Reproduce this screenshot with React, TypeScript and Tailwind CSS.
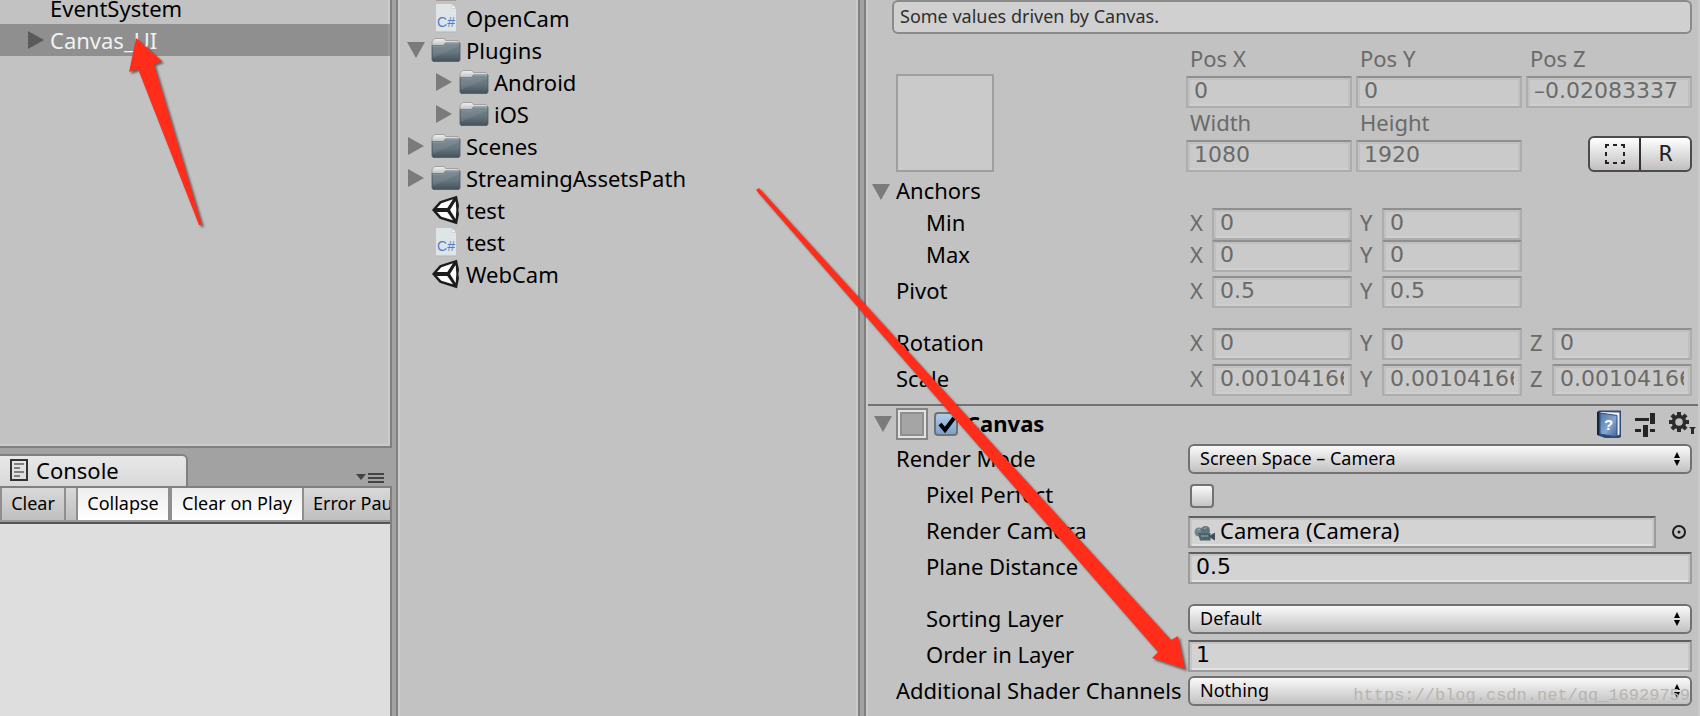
import type { ReactNode } from "react"
import clsx from "clsx"

const fieldBase =
  "block h-8 w-full min-w-0 rounded-none border-2 px-1.5 pb-1 text-[22px] leading-6 outline-none"
const numeric = "font-['DejaVu_Sans',sans-serif]"
const fieldOff =
  "border-[#adadad] border-t-[#8f8f8f] bg-[#cacaca] text-[#6a6a6a] shadow-[inset_0_2px_0_#bfbfbf,inset_2px_0_0_#c0c0c0,inset_-2px_0_0_#c0c0c0,inset_0_-2px_0_#d0d0d0]"
const fieldOn =
  "border-[#9b9b9b] border-t-[#5f5f5f] bg-[#d3d3d3] text-black shadow-[inset_0_2px_0_#c4c4c4,inset_2px_0_0_#c6c6c6,inset_-2px_0_0_#c6c6c6,inset_0_-2px_0_#e2e2e2]"

function Foldout({ open, dark }: { open?: boolean; dark?: boolean }) {
  return (
    <svg viewBox="0 0 18 18" className={clsx("h-[18px] w-[18px] shrink-0", dark ? "fill-[#5a5a5a]" : "fill-[#7b7b7b]")}>
      {open ? <path d="M0 1h18L9 17z" /> : <path d="M1 0v18l16-9z" />}
    </svg>
  )
}

function FolderIcon() {
  return (
    <svg viewBox="0 0 30 26" className="h-[26px] w-[30px] shrink-0">
      <defs>
        <linearGradient id="folder" x1="0" y1="0" x2="0" y2="1">
          <stop offset="0" stopColor="#74858d" />
          <stop offset="0.5" stopColor="#66767e" />
          <stop offset="1" stopColor="#44525a" />
        </linearGradient>
        <linearGradient id="folderTab" x1="0" y1="0" x2="0" y2="1">
          <stop offset="0" stopColor="#f2f2f2" />
          <stop offset="1" stopColor="#b9bcbd" />
        </linearGradient>
      </defs>
      <path d="M1 9V4.500L4 1.500h9l1.500 2H27l1.500 1.500v4z" fill="url(#folderTab)" stroke="#8f9496" strokeWidth="0.800" />
      <path d="M1 8.500h11.500l2-2.500H29v17l-1 1.500H2L1 23z" fill="url(#folder)" stroke="#4b5a62" strokeWidth="0.800" />
      <path d="M1.500 9h11.300l2-2.500h13.700" fill="none" stroke="#93a2a9" strokeWidth="0.900" />
      <path d="M2 21L28 9.500V7H15l-2 2.500H2z" fill="#fff" opacity="0.080" />
    </svg>
  )
}

function ScriptIcon() {
  return (
    <svg viewBox="0 0 30 30" className="h-[30px] w-[30px] shrink-0">
      <path d="M5 1h16l4 4.500V29H5z" fill="#dfe4e7" />
      <path d="M5 29h20" stroke="#b1b3b4" />
      <path d="M21 1v4.500h4z" fill="#f7f9fa" stroke="#c5cacd" strokeWidth="0.700" />
      <text x="15" y="24" textAnchor="middle" fontSize="14" className="fill-[#4f7cc8] font-['Liberation_Sans',sans-serif]">
        C#
      </text>
    </svg>
  )
}

function UnityIcon() {
  return (
    <svg viewBox="0 0 90 90" className="h-[30px] w-[30px] shrink-0">
      <path d="M3 45L26 19 78 2l6 30-2 13 2 13-6 30-52-17z" fill="#1c1c1c" />
      <path d="M18 39L31 25l35-12-17 26z" fill="#fff" />
      <path d="M18 51l13 14 35 11-17-25z" fill="#fff" />
      <path d="M57 45l17-27 2 27-2 27z" fill="#fff" />
    </svg>
  )
}

function CameraIcon() {
  return (
    <svg viewBox="0 0 22 16" className="h-4 w-[22px]">
      <circle cx="5" cy="6" r="4.500" fill="#6f848c" />
      <circle cx="11.500" cy="4.500" r="4.500" fill="#5e737c" />
      <path d="M4 7h12.500v7.500H6z" fill="#4d626b" />
      <path d="M16 9.500l5-3v8l-5-3z" fill="#3f5058" />
      <path d="M3.500 4.500a2 2 0 0 1 2.500-1M10 3a2 2 0 0 1 2.500-1" stroke="#a9b8be" fill="none" />
      <path d="M7 10h7" stroke="#7f949c" strokeWidth="1.500" />
    </svg>
  )
}

function BookIcon() {
  return (
    <svg viewBox="0 0 26 28" className="h-7 w-[26px]">
      <defs>
        <linearGradient id="book" x1="0" y1="0" x2="1" y2="1">
          <stop offset="0" stopColor="#4f74a8" />
          <stop offset="0.550" stopColor="#86a6d0" />
          <stop offset="1" stopColor="#3f6497" />
        </linearGradient>
      </defs>
      <path d="M1 2L3 .500h22V27l-2 1H9l-8-3z" fill="#2c4a76" />
      <path d="M4 2l19.500.500v22l-2 1z" fill="#eef1f5" />
      <path d="M1 2.500l2-1v24L1 24.500z" fill="#14243c" />
      <path d="M4 3l17 2.500V27L4 24z" fill="url(#book)" stroke="#2e4d7c" />
      <text x="12.500" y="20" textAnchor="middle" fontSize="15" className="fill-white font-['Liberation_Sans',sans-serif] font-bold">
        ?
      </text>
    </svg>
  )
}

function PresetIcon() {
  return (
    <svg viewBox="0 0 22 26" className="h-[26px] w-[22px] fill-[#252525]">
      <path d="M1 7h14v3H1zM16 2h5v11h-5zM1 18h6v3H1zM9 14h5v12H9zM16 18h5v3h-5z" />
    </svg>
  )
}

function GearIcon() {
  const teeth = [0, 45, 90, 135, 180, 225, 270, 315]
  return (
    <svg viewBox="0 0 28 26" className="h-[26px] w-7 fill-[#2c2c2c]">
      {teeth.map((angle) => (
        <rect key={angle} x="9" y="1" width="4" height="5" transform={`rotate(${angle} 11 11)`} />
      ))}
      <circle cx="11" cy="11" r="5.500" fill="none" stroke="#2c2c2c" strokeWidth="3.500" />
      <path d="M21 16h7l-2 2v5h-3v-5z" />
    </svg>
  )
}

function TreeRow({ label, icon, depth = 0, fold }: { label: string; icon: ReactNode; depth?: number; fold?: "open" | "closed" }) {
  return (
    <li className={clsx("flex h-8 items-center", depth === 1 && "pl-7")}>
      <span className="ml-[7px] w-6">{fold && <Foldout open={fold === "open"} />}</span>
      {icon}
      <span className="ml-[5px] text-[22px]">{label}</span>
    </li>
  )
}

function Hierarchy() {
  return (
    <section className="min-h-0 flex-1 border-r-2 border-b-2 border-[#7f7f7f]">
      <div className="h-full border-r-2 border-b-2 border-[#cbcbcb] bg-[#c2c2c2]">
        <ul className="text-[22px]">
          <li className="h-6 pl-[50px] leading-4">EventSystem</li>
          <li className="-mr-0.5 flex h-8 items-center border-r-2 border-[#9b9b9b] bg-[#8f8f8f] pl-[27px] text-[#f2f2f2]">
            <Foldout dark />
            <span className="ml-[5px]">Canvas_UI</span>
          </li>
        </ul>
      </div>
    </section>
  )
}

function Console() {
  const idle = "bg-linear-to-b from-[#d9d9d9] to-[#bfbfbf] pb-0.5"
  const active = "bg-linear-to-b from-[#eeeeee] to-white pb-0.5"
  return (
    <section className="flex h-[268px] flex-col">
      <div className="flex h-[38px] items-end justify-between">
        <button className="flex h-8 w-[188px] items-center rounded-tr-md border-t-2 border-r-2 border-[#808080] bg-linear-to-b from-[#e8e8e8] to-[#d9d9d9] pb-0.5 pl-2.5 text-[22px]">
          <svg viewBox="0 0 18 22" className="h-[22px] w-[18px] fill-none stroke-[#333]">
            <path d="M1 1h16v20H1z" strokeWidth="2" />
            <path d="M4 5h10M4 9h6M4 13h10M4 17h6" stroke="#808080" strokeWidth="2" />
          </svg>
          <span className="ml-2">Console</span>
        </button>
        <button aria-label="Console menu" className="mr-2 mb-0.5">
          <svg viewBox="0 0 28 12" className="h-3 w-7 fill-[#444]">
            <path d="M0 2h10L5 8zM12 1h16v2H12zM12 5h16v2H12zM12 9h16v2H12z" />
          </svg>
        </button>
      </div>
      <div className="min-h-0 flex-1 border-t-2 border-r-2 border-[#808080] bg-[#dedede]">
        <div className="flex h-9 overflow-hidden border-b-2 border-[#555] text-lg whitespace-nowrap">
          <div className="flex w-full border-b-2 border-[#999]">
            <button className={clsx("w-[66px] shrink-0 border-r-2 border-l-2 border-[#8f8f8f]", idle)}>Clear</button>
            <span className={clsx("w-2.5 shrink-0", idle)} />
            <button className={clsx("w-[94px] shrink-0 border-r-2 border-l-2 border-[#8f8f8f]", active)}>Collapse</button>
            <button className={clsx("w-[134px] shrink-0 border-r-2 border-l-2 border-[#8f8f8f]", active)}>Clear on Play</button>
            <button className={clsx("shrink-0 pr-4 pl-[9px]", idle)}>Error Pause</button>
          </div>
        </div>
      </div>
    </section>
  )
}

function Project() {
  return (
    <section className="w-[464px] shrink-0 border-x-2 border-[#7f7f7f]">
      <div className="h-full border-x-2 border-[#cbcbcb] bg-[#c2c2c2]">
        <div className="h-0.5 pl-9">
          <div className="h-px w-5 bg-[#a59c9a]" />
        </div>
        <ul>
          <TreeRow label="OpenCam" icon={<ScriptIcon />} />
          <TreeRow label="Plugins" icon={<FolderIcon />} fold="open" />
          <TreeRow label="Android" icon={<FolderIcon />} fold="closed" depth={1} />
          <TreeRow label="iOS" icon={<FolderIcon />} fold="closed" depth={1} />
          <TreeRow label="Scenes" icon={<FolderIcon />} fold="closed" />
          <TreeRow label="StreamingAssetsPath" icon={<FolderIcon />} fold="closed" />
          <TreeRow label="test" icon={<UnityIcon />} />
          <TreeRow label="test" icon={<ScriptIcon />} />
          <TreeRow label="WebCam" icon={<UnityIcon />} />
        </ul>
      </div>
    </section>
  )
}

function StackedField({ label, value }: { label: string; value: string }) {
  return (
    <label className="block text-[22px] text-[#6a6a6a]">
      <span className="block h-8 pl-1 leading-7">{label}</span>
      <input disabled defaultValue={value} className={clsx(fieldBase, fieldOff, numeric)} />
    </label>
  )
}

function VectorRow({ name, values, indent }: { name: string; values: string[]; indent?: boolean }) {
  const axes = ["X", "Y", "Z"]
  return (
    <div className="flex h-8 items-center">
      <span className={clsx("w-[290px] shrink-0 pb-1 text-[22px] leading-7", indent && "pl-[30px]")}>{name}</span>
      <div className="grid flex-1 grid-cols-3 gap-1">
        {values.map((value, i) => (
          <label key={axes[i]} className="flex items-center text-[22px] text-[#6a6a6a]">
            <span className="w-[26px] shrink-0 pb-1 pl-1 leading-7">{axes[i]}</span>
            <input disabled defaultValue={value} aria-label={`${name} ${axes[i]}`} className={clsx(fieldBase, fieldOff, numeric)} />
          </label>
        ))}
      </div>
    </div>
  )
}

function PropertyRow({ id, name, indent, children }: { id: string; name: string; indent?: boolean; children: ReactNode }) {
  return (
    <div className="flex h-8 items-center">
      <label htmlFor={id} className={clsx("mr-0.5 w-[290px] shrink-0 pb-1 text-[22px] leading-7 whitespace-nowrap", indent && "pl-[30px]")}>
        {name}
      </label>
      {children}
    </div>
  )
}

function Popup({ id, value }: { id: string; value: string }) {
  return (
    <div className="relative mb-0.5 flex-1">
      <select
        id={id}
        defaultValue={value}
        className="block h-[30px] w-full appearance-none rounded-md border-2 border-[#727272] bg-linear-to-b from-[#fafafa] to-[#c3c1c2] pr-8 pb-0.5 pl-2.5 text-lg leading-6 text-black outline-none"
      >
        <option>{value}</option>
      </select>
      <svg viewBox="0 0 6 14" className="pointer-events-none absolute top-2 right-3 h-3.5 w-1.5 fill-black">
        <path d="M3 0l3 6H0zM0 8h6l-3 6z" />
      </svg>
    </div>
  )
}

function Tick({ id, checked, label }: { id: string; checked?: boolean; label?: string }) {
  return (
    <span className="relative h-6 w-6 shrink-0">
      <input
        id={id}
        type="checkbox"
        aria-label={label}
        defaultChecked={checked}
        className="block h-6 w-6 appearance-none rounded border-2 border-[#727272] bg-linear-to-b from-[#fafafa] to-[#c6c4c5] checked:from-[#b4cbe6] checked:to-[#7aa0d2]"
      />
      {checked && (
        <svg viewBox="0 0 24 24" className="pointer-events-none absolute inset-0 h-6 w-6 fill-none stroke-black stroke-[4]">
          <path d="M6 12l5 6L20 6" />
        </svg>
      )}
    </span>
  )
}

function Inspector() {
  return (
    <section className="min-w-0 flex-1 border-l-2 border-[#7f7f7f]">
      <div className="h-full border-x-2 border-[#cbcbcb] bg-[#c2c2c2]">
        <div className="pr-1.5 pb-2 pl-6">
          <p className="h-[34px] rounded-md border-2 border-[#8a8a8a] bg-[#d0d0d0] pl-1.5 text-lg leading-7 text-[#2e2e2e]">
            Some values driven by Canvas.
          </p>
          <div className="mt-2.5 flex items-end pl-1">
            <div className="mr-48 h-[98px] w-[98px] shrink-0 border-2 border-[#9f9f9f] bg-[#cacaca]" />
            <div className="grid flex-1 grid-cols-3 items-end gap-x-1">
              <StackedField label="Pos X" value="0" />
              <StackedField label="Pos Y" value="0" />
              <StackedField label="Pos Z" value="–0.02083337" />
              <StackedField label="Width" value="1080" />
              <StackedField label="Height" value="1920" />
              <div className="ml-auto flex h-9 w-[104px] divide-x-2 divide-[#333] rounded-md border-2 border-[#4c4c4c] bg-linear-to-b from-white to-[#c1bfc0]">
                <button aria-label="Blueprint mode" className="flex flex-1 items-center justify-center">
                  <svg viewBox="0 0 20 20" className="h-5 w-5 fill-[#222]">
                    <path d="M0 0h4v2H2v2H0zM8 0h4v2H8zM16 0h4v4h-2V2h-2zM0 8h2v4H0zM18 8h2v4h-2zM0 16h2v2h2v2H0zM8 18h4v2H8zM18 16h2v4h-4v-2h2z" />
                  </svg>
                </button>
                <button aria-label="Raw edit mode" className="flex-1 font-['DejaVu_Sans_Mono',monospace] text-[22px] leading-8 text-[#222]">
                  R
                </button>
              </div>
            </div>
          </div>
          <div className="mt-1 flex h-8 items-center text-[22px]">
            <span className="-ml-5 w-6">
              <Foldout open />
            </span>
            <span className="pb-1 leading-7">Anchors</span>
          </div>
          <div className="pl-1">
            <VectorRow name="Min" values={["0", "0"]} indent />
            <VectorRow name="Max" values={["0", "0"]} indent />
            <div className="mt-1">
              <VectorRow name="Pivot" values={["0.5", "0.5"]} />
            </div>
            <div className="mt-5 flex flex-col gap-1">
              <VectorRow name="Rotation" values={["0", "0", "0"]} />
              <VectorRow name="Scale" values={["0.001041666", "0.001041666", "0.001041666"]} />
            </div>
          </div>
        </div>

        <div className="border-t-2 border-[#727272] pt-0.5">
          <header className="flex h-8 items-center pr-0.5 pl-1.5">
            <Foldout open />
            <span className="ml-1 h-8 w-8 border-2 border-[#858585] bg-[#e2e2e2] p-0.5">
              <span className="block h-full border-2 border-[#8f8f8f] bg-[#a5a5a5]" />
            </span>
            <span className="ml-1.5 flex">
              <Tick id="canvas-enabled" checked label="Canvas enabled" />
            </span>
            <h2 className="ml-2 pb-0.5 text-[22px] leading-7 font-bold">Canvas</h2>
            <div className="ml-auto flex items-center gap-3">
              <button aria-label="Help"><BookIcon /></button>
              <button aria-label="Presets"><PresetIcon /></button>
              <button aria-label="Settings"><GearIcon /></button>
            </div>
          </header>
          <div className="mt-1 flex flex-col gap-1 pr-1.5 pl-7">
            <PropertyRow id="render-mode" name="Render Mode">
              <Popup id="render-mode" value="Screen Space – Camera" />
            </PropertyRow>
            <PropertyRow id="pixel-perfect" name="Pixel Perfect" indent>
              <span className="flex pl-0.5">
                <Tick id="pixel-perfect" />
              </span>
            </PropertyRow>
            <PropertyRow id="render-camera" name="Render Camera" indent>
              <div className="relative flex-1">
                <input id="render-camera" readOnly defaultValue="Camera (Camera)" className={clsx(fieldBase, fieldOn, "pl-[30px]")} />
                <span className="pointer-events-none absolute top-2.5 left-1.5">
                  <CameraIcon />
                </span>
              </div>
              <button aria-label="Select camera" className="ml-2.5 w-[26px]">
                <svg viewBox="0 0 16 16" className="mx-auto h-4 w-4">
                  <circle cx="8" cy="8" r="6" fill="none" stroke="#1c1c1c" strokeWidth="2" />
                  <circle cx="8" cy="8" r="1.500" fill="#1c1c1c" />
                </svg>
              </button>
            </PropertyRow>
            <PropertyRow id="plane-distance" name="Plane Distance" indent>
              <input id="plane-distance" defaultValue="0.5" className={clsx(fieldBase, fieldOn, numeric, "flex-1")} />
            </PropertyRow>
            <div className="h-3" />
            <PropertyRow id="sorting-layer" name="Sorting Layer" indent>
              <Popup id="sorting-layer" value="Default" />
            </PropertyRow>
            <PropertyRow id="order-in-layer" name="Order in Layer" indent>
              <input id="order-in-layer" defaultValue="1" className={clsx(fieldBase, fieldOn, numeric, "flex-1")} />
            </PropertyRow>
            <PropertyRow id="shader-channels" name="Additional Shader Channels">
              <Popup id="shader-channels" value="Nothing" />
            </PropertyRow>
          </div>
        </div>
      </div>
    </section>
  )
}

function Arrows() {
  return (
    <svg viewBox="0 0 1700 716" className="pointer-events-none absolute top-0 left-0 h-[716px] w-[1700px] fill-[#ff2d1a] drop-shadow-[2px_2px_1px_rgba(0,0,0,0.5)]">
      <path d="M136 38L162 61l-8 3 48 161h-3L138 69l-9 3z" />
      <path d="M756 190l3-2 412 452 7-4 7 33-33-11 6-6z" />
    </svg>
  )
}

export default function App() {
  return (
    <main className="relative flex h-screen gap-1 overflow-hidden bg-[#a2a2a2] font-['Noto_Sans','Open_Sans',sans-serif] text-black">
      <div className="flex w-[392px] shrink-0 flex-col">
        <Hierarchy />
        <Console />
      </div>
      <Project />
      <Inspector />
      <Arrows />
      <p className="pointer-events-none absolute right-2.5 bottom-2 font-['Liberation_Mono',monospace] text-[17px] text-[#b6b6ae]">
        https://blog.csdn.net/qq_16929759
      </p>
    </main>
  )
}
